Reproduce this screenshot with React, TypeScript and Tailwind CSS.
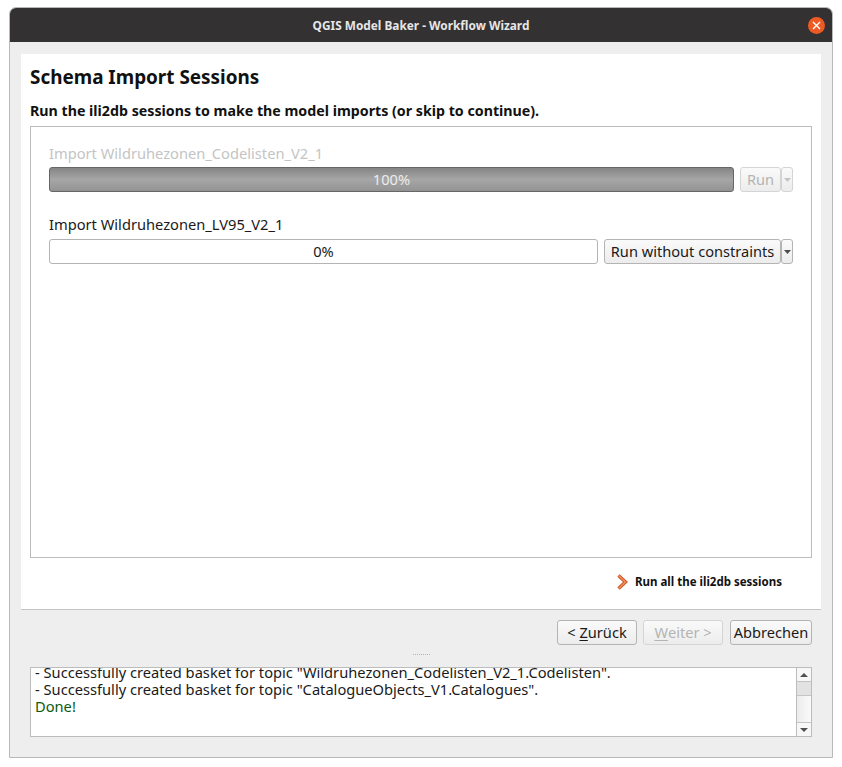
import { ReactNode } from "react";

const FONT = "font-['Noto_Sans','Open_Sans',sans-serif]";

function Button({
  children,
  disabled,
  className = "",
}: {
  children: ReactNode;
  disabled?: boolean;
  className?: string;
}) {
  return (
    <div
      className={`flex h-[25px] items-center justify-center rounded-[3px] border bg-gradient-to-b from-[#fafafa] to-[#ececec] text-[14.6px] leading-none ${
        disabled ? "border-[#d4d4d4] text-[#b4b4b4]" : "border-[#b4b4b4] text-[#1a1a1a]"
      } ${className}`}
    >
      {children}
    </div>
  );
}

function MenuArrow({ disabled }: { disabled?: boolean }) {
  return (
    <div
      className={`flex h-[25px] w-[12px] items-center justify-center rounded-[3px] border bg-gradient-to-b from-[#fafafa] to-[#ececec] ${
        disabled ? "border-[#d4d4d4]" : "border-[#b4b4b4]"
      }`}
    >
      <svg width="7" height="4" viewBox="0 0 7 4">
        <path d="M0 0h7L3.5 4z" fill={disabled ? "#c4c4c4" : "#4c4c4c"} />
      </svg>
    </div>
  );
}

function Session({
  label,
  percent,
  done,
  children,
}: {
  label: string;
  percent: string;
  done?: boolean;
  children: ReactNode;
}) {
  return (
    <div>
      <div className={`h-[19px] text-[14.67px] leading-[19px] ${done ? "text-[#c4c4c4]" : "text-[#1a1a1a]"}`}>{label}</div>
      <div className={`flex items-center ${done ? "mt-[4px]" : "mt-[5px]"}`}>
        <div
          className={`flex h-[25px] flex-1 items-center justify-center rounded-[3px] border text-[14.67px] leading-none text-[#1a1a1a] ${
            done
              ? "border-[#666666] bg-gradient-to-b from-[#858585] via-[#a6a6a6] to-[#939393] text-[#ececec]"
              : "border-[#b4b4b4] bg-white"
          }`}
        >
          {percent}
        </div>
        {children}
      </div>
    </div>
  );
}

function LogScrollbar() {
  return (
    <div className="flex w-[15px] flex-col border-l border-[#bcbcbc] bg-gradient-to-r from-[#ececec] to-[#fafafa]">
      <div className="flex h-[14px] items-center justify-center border-b border-[#c4c4c4] bg-[#f7f7f7]">
        <svg width="8" height="4" viewBox="0 0 8 4">
          <path d="M4 0l4 4H0z" fill="#505050" />
        </svg>
      </div>
      <div className="h-[14px] border-b border-[#c4c4c4] bg-[#e2e2e2]" />
      <div className="flex-1" />
      <div className="flex h-[14px] items-center justify-center border-t border-[#c4c4c4] bg-[#f7f7f7]">
        <svg width="8" height="4" viewBox="0 0 8 4">
          <path d="M0 0h8L4 4z" fill="#505050" />
        </svg>
      </div>
    </div>
  );
}

export default function App() {
  return (
    <div className={`h-[767px] w-[842px] bg-white pl-[9px] pr-[9px] pt-[7px] ${FONT}`}>
      <div className="flex h-[751px] w-[824px] flex-col overflow-hidden rounded-t-[7px] border border-[#b8b8b8] bg-[#eeeeee]">
        {/* title bar */}
        <div className="relative flex h-[34px] shrink-0 items-center justify-center bg-[#333132] pt-[1px] text-[11.85px] font-bold text-[#e6e6e6]">
          QGIS Model Baker - Workflow Wizard
          <div className="absolute right-[7px] top-[9px] flex h-[17px] w-[17px] items-center justify-center rounded-full bg-[#ee5a24]">
            <svg width="9" height="9" viewBox="0 0 9 9">
              <path d="M1 1l7 7M8 1L1 8" stroke="#ffffff" strokeWidth="1.4" />
            </svg>
          </div>
        </div>

        {/* wizard page */}
        <div className="mt-[12px] ml-[11px] flex h-[555px] w-[800px] shrink-0 flex-col bg-white pl-[9px] pr-[9px]">
          <h1 className="mt-[9px] h-[28px] text-[18.9px] font-bold leading-[28px] text-[#111111]">
            Schema Import Sessions
          </h1>
          <p className="mt-[10px] h-[20px] text-[14.22px] font-bold leading-[20px] text-[#111111]">
            Run the ili2db sessions to make the model imports (or skip to continue).
          </p>
          <div className="mt-[5px] flex h-[432px] flex-col gap-[23px] border border-[#bcbcbc] px-[18px] pt-[17px]">
            <Session label="Import Wildruhezonen_Codelisten_V2_1" percent="100%" done>
              <Button disabled className="ml-[6px] w-[41px]">
                Run
              </Button>
              <MenuArrow disabled />
            </Session>
            <Session label="Import Wildruhezonen_LV95_V2_1" percent="0%">
              <Button className="ml-[6px] w-[177px]">Run without constraints</Button>
              <MenuArrow />
            </Session>
          </div>
          <div className="mt-[15px] flex items-center justify-end pr-[30px]">
            <svg width="12" height="16" viewBox="0 0 12 16" className="mr-[7px]">
              <path d="M2.5 1.5L9.5 8l-7 6.5" fill="none" stroke="#c9552a" strokeWidth="3.4" />
              <path d="M2.5 1.5L9.5 8l-7 6.5" fill="none" stroke="#f2935a" strokeWidth="1.4" />
            </svg>
            <span className="text-[11.5px] font-bold leading-[18px] text-[#111111]">Run all the ili2db sessions</span>
          </div>
        </div>
        <div className="ml-[11px] h-px w-[800px] shrink-0 bg-[#c4c4c4]" />

        {/* wizard buttons */}
        <div className="mt-[10px] flex shrink-0 justify-end gap-[6px] pr-[20px]">
          <Button className="w-[80px]">
            &lt;&nbsp;<span className="underline underline-offset-2">Z</span>urück
          </Button>
          <Button disabled className="w-[80px]">
            <span className="underline underline-offset-2">W</span>eiter &gt;
          </Button>
          <Button className="ml-[1px] w-[82px]">Abbrechen</Button>
        </div>

        {/* splitter handle */}
        <div className="mt-[7px] flex h-[5px] shrink-0 items-center justify-center">
          <div className="w-[17px] border-t border-dotted border-[#b4b4b4]" />
        </div>

        {/* log */}
        <div className="ml-[20px] mt-[10px] flex h-[70px] w-[782px] shrink-0 border border-[#bcbcbc] bg-white">
          <div className="flex-1 overflow-hidden pl-[4px] text-[14.67px] leading-[17px] text-[#1a1a1a]">
            <div className="-mt-[4px]">- Successfully created basket for topic "Wildruhezonen_Codelisten_V2_1.Codelisten".</div>
            <div>- Successfully created basket for topic "CatalogueObjects_V1.Catalogues".</div>
            <div className="text-[#0b5a0b]">Done!</div>
          </div>
          <LogScrollbar />
        </div>
      </div>
    </div>
  );
}
